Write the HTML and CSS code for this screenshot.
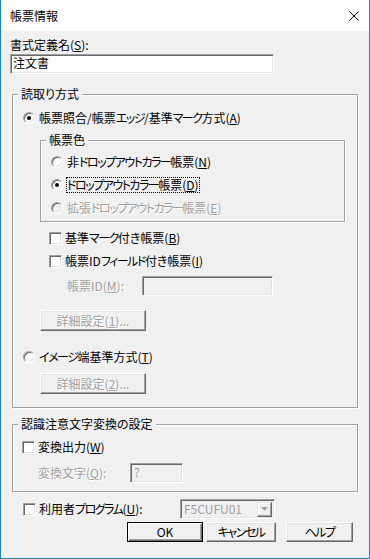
FILE: index.html
```html
<!DOCTYPE html>
<html lang="ja">
<head>
    <meta charset="UTF-8">
    <title>帳票情報</title>
    <link rel="stylesheet" href="styles.css">
</head>
<body>
    <div class="window">
        <div class="titlebar">
            <span class="title">帳票情報</span>
            <svg class="close" width="10" height="10" viewBox="0 0 10 10"><path d="M0.5 0.5 L9.5 9.5 M9.5 0.5 L0.5 9.5" stroke="#000" stroke-width="1"/></svg>
        </div>
        <div class="client">
            <div class="label">書式定義名(<u>S</u>):</div>
            <div class="edit name-edit">注文書</div>

            <div class="group read-group">
                <span class="group-title">読取り方式</span>
                <div class="row"><span class="radio checked"></span>帳票照合/帳票<span class="k">エッジ</span>/基準<span class="k">マーク</span>方式(<u>A</u>)</div>
                <div class="group color-group">
                    <span class="group-title">帳票色</span>
                    <div class="row"><span class="radio"></span>非<span class="k">ドロップアウトカラー</span>帳票(<u>N</u>)</div>
                    <div class="row row-gap"><span class="radio checked"></span><span class="focus"><span class="k">ドロップアウトカラー</span>帳票(<u>D</u>)</span></div>
                    <div class="row row-gap disabled"><span class="radio off"></span>拡張<span class="k">ドロップアウトカラー</span>帳票(<u>E</u>)</div>
                </div>
                <div class="row check-b"><span class="check"></span>基準<span class="k">マーク</span>付き帳票(<u>B</u>)</div>
                <div class="row check-i"><span class="check"></span>帳票ID<span class="k">フィールド</span>付き帳票(<u>I</u>)</div>
                <div class="field id-field">
                    <span class="field-label disabled">帳票ID(<u>M</u>):</span>
                    <span class="edit off id-edit"></span>
                </div>
                <div class="btn off detail-1">詳細設定(<u>1</u>)...</div>
                <div class="row radio-t"><span class="radio"></span><span class="k">イメージ</span>端基準方式(<u>T</u>)</div>
                <div class="btn off detail-2">詳細設定(<u>2</u>)...</div>
            </div>

            <div class="group conv-group">
                <span class="group-title">認識注意文字変換の設定</span>
                <div class="row"><span class="check"></span>変換出力(<u>W</u>)</div>
                <div class="field conv-field">
                    <span class="field-label disabled">変換文字(<u>Q</u>):</span>
                    <span class="edit off conv-edit">?</span>
                </div>
            </div>

            <div class="field user-field">
                <span class="check"></span>
                <span class="user-label">利用者<span class="k">プログラム</span>(<u>U</u>):</span>
                <span class="combo">
                    <span class="combo-text">F5CUFU01</span>
                    <span class="combo-btn"><svg width="7" height="4" viewBox="0 0 7 4"><path d="M0 0 H7 L3.5 4 Z" fill="#a0a0a0"/></svg></span>
                </span>
            </div>

            <div class="buttons">
                <div class="btn default ok-btn">OK</div>
                <div class="btn cancel-btn"><span class="k">キャンセル</span></div>
                <div class="btn help-btn"><span class="k">ヘルプ</span></div>
            </div>
        </div>
    </div>
</body>
</html>
```

FILE: styles.css
```css
body { margin: 0; background: #fff; font-family: "Noto Sans CJK JP", "Noto Sans", sans-serif; font-size: 12px; color: #000; font-feature-settings: "palt"; }
u { text-decoration: underline; text-underline-offset: 1px; }
.k { letter-spacing: -1.5px; }

.window { width: 370px; height: 559px; box-sizing: border-box; border: 1px solid #1883d7; border-top: none; display: flex; flex-direction: column; background: #f0f0f0; }
.titlebar { height: 31px; flex: none; background: #fff; display: flex; align-items: center; justify-content: space-between; padding: 0 10px 0 9px; }
.title { line-height: 14px; }
.close { display: block; }

.client { flex: 1; padding: 7px 0 0 9px; }
.label { line-height: 14px; height: 14px; white-space: nowrap; }

.edit { display: block; box-sizing: border-box; height: 20px; line-height: 16px; padding-left: 2px; background: #fff; border: 1px solid; border-color: #a0a0a0 #fff #fff #a0a0a0; box-shadow: inset 1px 1px #696969, inset -1px -1px #e3e3e3; white-space: nowrap; }
.edit.off { background: #f0f0f0; color: #a0a0a0; }
.name-edit { width: 264px; margin-top: 2px; }

.group { position: relative; box-sizing: border-box; border: 1px solid #a0a0a0; box-shadow: inset 1px 1px #fff, 1px 1px #fff; }
.group-title { position: absolute; top: -8px; left: 5px; padding: 0 3px; line-height: 14px; background: #f0f0f0; white-space: nowrap; }

.read-group { width: 346px; margin: 20px 0 0 2px; padding: 16px 0 13px 10px; }
.color-group { width: 305px; margin: 15px 0 0 17px; padding: 14px 0 6px 10px; }
.conv-group { width: 346px; margin: 16px 0 0 2px; padding: 15px 0 8px 9px; }

.row { display: flex; align-items: center; height: 14px; line-height: 14px; white-space: nowrap; }
.row-gap { margin-top: 9px; }
.disabled { color: #a0a0a0; text-shadow: 1px 1px #fff; }

.radio { flex: none; width: 12px; height: 12px; box-sizing: border-box; margin-right: 4px; border-radius: 50%; background: #fff; border: 1px solid; border-color: #a0a0a0 #fff #fff #a0a0a0; box-shadow: inset 1px 1px #696969, inset -1px -1px #e3e3e3; display: flex; align-items: center; justify-content: center; }
.radio.checked::after { content: ""; width: 4px; height: 4px; border-radius: 50%; background: #000; }
.radio.off { background: #f0f0f0; }

.check { flex: none; width: 13px; height: 13px; box-sizing: border-box; margin-right: 3px; background: #fff; border: 1px solid; border-color: #a0a0a0 #fff #fff #a0a0a0; box-shadow: inset 1px 1px #696969, inset -1px -1px #e3e3e3; }

.focus { display: inline-block; height: 14px; outline: 1px dotted #000; }

.check-b { margin: 9px 0 0 26px; }
.check-i { margin: 9px 0 0 26px; }

.field { display: flex; align-items: center; height: 20px; white-space: nowrap; }
.field-label { line-height: 14px; }
.id-field { margin: 8px 0 0 44px; }
.id-field .field-label { width: 75px; }
.id-edit { width: 131px; }
.conv-field { margin-top: 9px; padding-left: 16px; }
.conv-field .field-label { width: 92px; }
.conv-edit { width: 53px; padding-left: 3px; }

.btn { box-sizing: border-box; height: 21px; display: flex; align-items: center; justify-content: center; line-height: 14px; white-space: nowrap; background: #f0f0f0; border: 1px solid; border-color: #fff #696969 #696969 #fff; box-shadow: inset -1px -1px #a0a0a0, inset 1px 1px #e3e3e3; }
.btn.off { color: #a0a0a0; text-shadow: 1px 1px #fff; }
.detail-1 { width: 106px; margin: 14px 0 0 17px; }
.radio-t { margin-top: 19px; }
.detail-2 { width: 106px; margin: 9px 0 0 17px; }

.user-field { margin: 7px 0 0 13px; }
.user-label { width: 141px; line-height: 14px; }
.combo { display: flex; align-items: center; justify-content: space-between; box-sizing: border-box; width: 95px; height: 20px; background: #f0f0f0; color: #a0a0a0; border: 1px solid; border-color: #a0a0a0 #fff #fff #a0a0a0; box-shadow: inset 1px 1px #696969, inset -1px -1px #e3e3e3; padding: 0 2px 0 3px; }
.combo-text { line-height: 14px; }
.combo-btn { width: 15px; height: 15px; box-sizing: border-box; display: flex; align-items: center; justify-content: center; border: 1px solid; border-color: #e3e3e3 #696969 #696969 #e3e3e3; box-shadow: inset -1px -1px #a0a0a0, inset 1px 1px #fff; }
.combo-btn svg { display: block; }

.buttons { display: flex; margin: 3px 0 0 117px; }
.buttons .btn { height: 20px; }
.ok-btn { width: 76px; }
.cancel-btn { width: 70px; margin-left: 3px; }
.help-btn { width: 67px; margin-left: 10px; }
.btn.default { border-color: #000; box-shadow: inset 1px 1px #fff, inset -1px -1px #696969, inset -2px -2px #a0a0a0; }
```
